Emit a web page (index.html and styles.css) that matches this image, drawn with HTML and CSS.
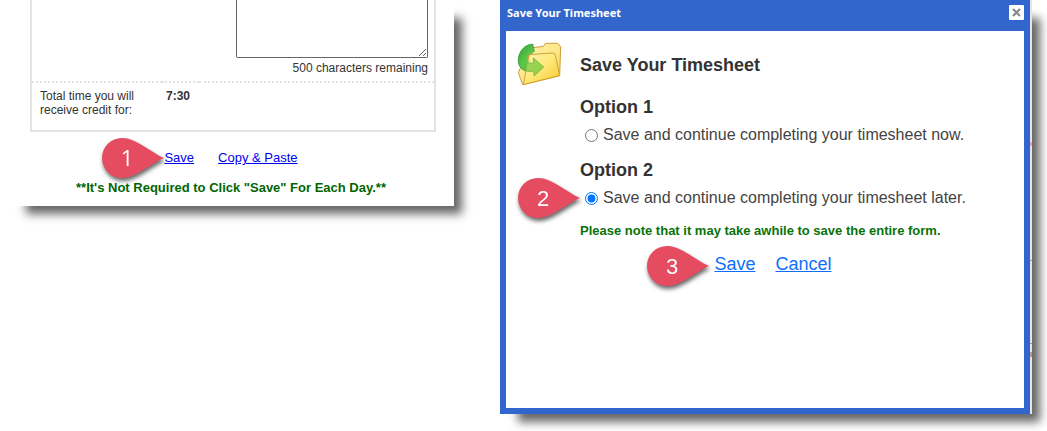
FILE: index.html
```html
<!DOCTYPE html>
<html lang="en">
<head>
<meta charset="utf-8">
<title>Save Your Timesheet</title>
<link rel="stylesheet" href="styles.css">
</head>
<body>
<main class="page">
  <section class="panel entry">
    <table class="entry-table">
      <tr>
        <td class="comment-cell" colspan="3">
          <textarea class="comment" id="comment" aria-label="Comments"></textarea>
          <label class="remaining" for="comment">500 characters remaining</label>
        </td>
      </tr>
      <tr class="total-row">
        <th class="total-label" scope="row">Total time you will receive credit for:</th>
        <td class="total-value">7:30</td>
        <td></td>
      </tr>
    </table>
    <div class="entry-actions">
      <span class="marked">
        <svg class="pin" viewBox="0 0 62 40"><path d="M20 0C34 0 48 14 62 20C48 26 34 40 20 40A20 20 0 0 1 20 0Z"/><text class="humanist" x="25" y="28">1</text></svg>
        <a href="#save">Save</a>
      </span>
      <a href="#copy">Copy &amp; Paste</a>
    </div>
    <p class="entry-note">**It's Not Required to Click "Save" For Each Day.**</p>
  </section>

  <section class="panel dialog-wrap">
    <div class="dialog" role="dialog" aria-labelledby="dialog-title">
      <header class="titlebar">
        <span id="dialog-title">Save Your Timesheet</span>
        <button class="close" type="button" aria-label="Close"><svg viewBox="0 0 9 9"><path d="M1 1L8 8M8 1L1 8"/></svg></button>
      </header>
      <div class="dialog-body">
        <svg class="folder" viewBox="0 0 162 162" aria-hidden="true">
          <defs>
            <linearGradient id="back" x1="0" y1="0" x2="1" y2="1"><stop offset="0" stop-color="#fff6b8"/><stop offset="1" stop-color="#f8d860"/></linearGradient>
            <linearGradient id="front" x1="0" y1="0" x2="1" y2="1"><stop offset="0" stop-color="#fffac0"/><stop offset=".5" stop-color="#ffe96e"/><stop offset="1" stop-color="#f5bd13"/></linearGradient>
            <linearGradient id="arrow" x1="0" y1="0" x2="1" y2="1"><stop offset="0" stop-color="#2fa332"/><stop offset=".4" stop-color="#5cc84c"/><stop offset="1" stop-color="#3fae2c"/></linearGradient>
          </defs>
          <path d="M50 37L94 31L101 22L137 22L146 32L143 119L32 146L19 110Z" fill="url(#back)" stroke="#d09c34" stroke-width="3" stroke-linejoin="round"/>
          <path d="M62 24C32 26 14 56 20 84C26 104 48 110 66 104L66 120L95 93L64 66L64 82C46 82 44 60 67 46Z" fill="url(#arrow)" stroke="#268d2a" stroke-width="2" stroke-linejoin="round"/>
          <path d="M51 56L123 51Q129 51 130 57L143 119L34 146Z" fill="url(#front)" fill-opacity=".65" stroke="#d4a22d" stroke-width="3" stroke-linejoin="round"/>
          <path d="M45 76C50 82 57 84 64 82L64 66L95 93L66 120L66 104C58 107 48 107 41 104Z" fill="#8ed04c" fill-opacity=".8" stroke="#6bb53a" stroke-width="2" stroke-linejoin="round"/>
        </svg>
        <form class="options">
          <h1>Save Your Timesheet</h1>
          <h2>Option 1</h2>
          <label class="choice"><input type="radio" name="when"><span>Save and continue completing your timesheet now.</span></label>
          <h2>Option 2</h2>
          <div class="marked">
            <svg class="pin" viewBox="0 0 62 40"><path d="M20 0C34 0 48 14 62 20C48 26 34 40 20 40A20 20 0 0 1 20 0Z"/><text x="25" y="28">2</text></svg>
            <label class="choice"><input type="radio" name="when" checked><span>Save and continue completing your timesheet later.</span></label>
          </div>
          <p class="form-note">Please note that it may take awhile to save the entire form.</p>
          <div class="form-actions">
            <span class="marked spaced">
              <svg class="pin" viewBox="0 0 62 40"><path d="M20 0C34 0 48 14 62 20C48 26 34 40 20 40A20 20 0 0 1 20 0Z"/><text x="25" y="28">3</text></svg>
              <a href="#save-form">Save</a>
            </span>
            <a href="#cancel">Cancel</a>
          </div>
        </form>
      </div>
    </div>
    <div class="edge"></div>
  </section>
</main>
</body>
</html>
```
FILE: styles.css
```css
* { box-sizing: border-box; }
body {
  margin: 0;
  background: #fff;
  color: #333;
  font-family: "Liberation Sans", Arial, sans-serif;
}
.page {
  display: grid;
  grid-template-columns: 446fr 532fr;
  gap: 46px;
  align-items: start;
  padding: 0 15px 17px 8px;
}
.panel {
  background: #fff;
  box-shadow: 13px 13px 9px -5px rgba(0, 0, 0, .6);
}
.entry { padding-bottom: 9px; }
.entry-table {
  width: calc(100% - 40px);
  margin: 0 18px 0 22px;
  border: 2px solid #e3e3e3;
  border-top: 0;
  border-spacing: 0;
  font-size: 12px;
  line-height: 14px;
}
.entry-table td,
.entry-table th { padding: 0; text-align: left; vertical-align: top; }
.entry-table .comment-cell { padding: 0 6px 6px; text-align: right; }
.comment {
  display: block;
  width: 192px;
  height: 58px;
  margin-left: auto;
  border: 1px solid #666;
  border-top: 0;
  border-radius: 0 0 2px 2px;
  background: #fff;
  resize: both;
}
.remaining { display: block; padding-top: 3px; }
.entry-table .total-row td,
.entry-table .total-row th {
  border-top: 2px dotted #e3e3e3;
  padding: 6px 4px 13px;
}
.entry-table .total-row .total-label { width: 130px; padding-left: 8px; padding-right: 20px; font-weight: normal; }
.entry-table .total-value { width: 37px; font-weight: bold; }
.entry-actions {
  display: flex;
  justify-content: center;
  gap: 24px;
  margin-top: 17px;
  font-size: 13px;
  line-height: 18px;
}
.entry-actions a { color: #00e; }
.entry-note {
  margin: 12px 0 0;
  color: #060;
  font-size: 13px;
  font-weight: bold;
  line-height: 18px;
  text-align: center;
}
.marked { position: relative; }
.pin {
  position: absolute;
  right: 100%;
  top: 50%;
  width: 62px;
  height: 40px;
  margin-top: -20px;
  overflow: visible;
  filter: drop-shadow(1px 3px 2px rgba(0, 0, 0, .6));
}
.spaced .pin { right: calc(100% + 5px); margin-top: -18px; }
.pin path { fill: #e64c60; }
.pin text { fill: #fff; font-size: 22px; text-anchor: middle; }
.pin .humanist { font-family: "Open Sans", sans-serif; }

.dialog-wrap { display: flex; }
.dialog {
  flex: 1;
  padding: 0 6px 6px;
  background: #36c;
}
.edge {
  width: 2px;
  background:
    linear-gradient(#999, #999) 0 260px / 2px 1px no-repeat,
    linear-gradient(#999, #999) 0 343px / 2px 1px no-repeat,
    linear-gradient(#b79a90, #b79a90) 0 352px / 2px 5px no-repeat,
    linear-gradient(#e0a0d8, #e0a0d8) 0 142px / 2px 4px no-repeat,
    #e6e2e8;
}
.titlebar {
  display: flex;
  justify-content: space-between;
  align-items: center;
  height: 31px;
  padding: 0 0 6px 1px;
  color: #fff;
  font: bold 11px/16px "Noto Sans", sans-serif;
}
.close {
  display: grid;
  place-items: center;
  width: 15px;
  height: 15px;
  padding: 0;
  border: 0;
  border-radius: 1px;
  background: #fff;
}
.close svg { width: 9px; height: 9px; }
.close path { stroke: #888; stroke-width: 2; }
.dialog-body {
  display: flex;
  align-items: flex-start;
  gap: 14px;
  min-height: 377px;
  padding: 5px 6px;
  background: #fff;
}
.folder { flex: none; width: 54px; height: 54px; }
.options { padding-top: 17px; }
h1, h2 {
  margin: 0;
  font-size: 18px;
  line-height: 24px;
}
h2 { margin: 11px 0 4px; }
h1 + h2 { margin-top: 18px; }
.choice {
  display: flex;
  align-items: center;
  gap: 5px;
  padding-left: 5px;
  color: #444;
  font-size: 16px;
  line-height: 24px;
}
.choice input { width: 13px; height: 13px; margin: 0; }
.form-note {
  margin: 12px 0;
  color: #0a720a;
  font-size: 13px;
  font-weight: bold;
  line-height: 18px;
}
.form-actions {
  display: flex;
  justify-content: center;
  gap: 20px;
  font-size: 18px;
  line-height: 24px;
}
.form-actions a { color: #0d6efd; }
```
